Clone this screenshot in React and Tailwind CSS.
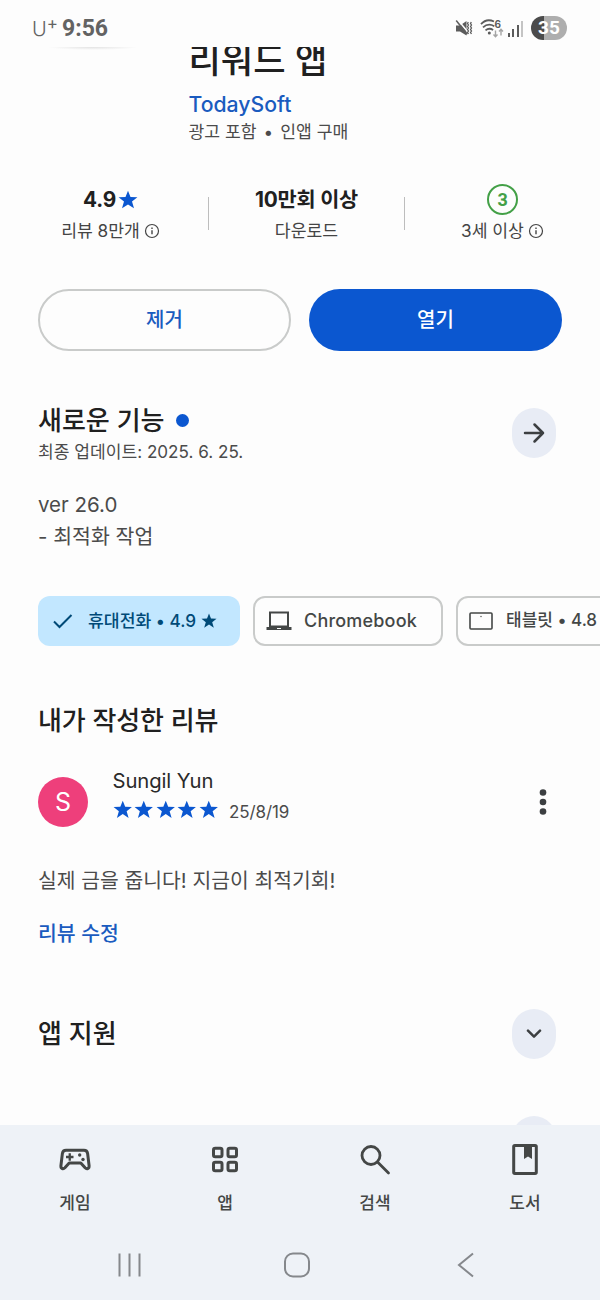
import clsx from "clsx";

const STAR_PATH =
  "M12 .8l3 7.500 8.300.3-6.500 5.200 2.400 8.200-7.200-4.700L4.800 22l2.400-8.200L.7 8.600l8.300-.3z";

const Star = ({ className }) => (
  <svg viewBox="0 0 24 24" fill="currentColor" className={className}>
    <path d={STAR_PATH} />
  </svg>
);

const InfoIcon = () => (
  <svg viewBox="0 0 16 16" fill="none" stroke="currentColor" className="size-4">
    <circle cx="8" cy="8" r="6.500" strokeWidth="1.200" />
    <path d="M8 7.200v4M8 4.600v1.300" strokeWidth="1.400" />
  </svg>
);

const StatusBar = () => (
  <header className="flex h-[47px] shrink-0 items-start justify-between pl-[32px] pr-[33px] text-[#636363]">
    <div className="flex pt-[15px] leading-7">
      <span className="text-[20px] font-light">U</span>
      <span className="-mt-[6px] text-[17px]">+</span>
      <span className="ml-[4px] font-['Roboto',sans-serif] text-[23px] font-bold">
        9:56
      </span>
    </div>
    <div className="flex items-center pt-[16px]">
      {/* 진동 모드 */}
      <svg viewBox="0 0 18 18" className="-ml-[2px] h-[18px] w-[18px]" fill="none">
        <path d="M1 6.500h4L11.500 2v14.500L5 12.500H1z" fill="#5c5c5c" />
        <path d="M2.500 0.500l12 14.500" stroke="#fdfdfd" strokeWidth="1.600" />
        <path d="M1.200 1.500l11 13.800" stroke="#5c5c5c" strokeWidth="1.500" />
        <path
          d="M13.300 3l-.8 1.500 1 1.500-1 1.500 1 1.500-1 1.500 1 1.500-1 1.500 1 1.500M16.300 3l-.8 1.500 1 1.500-1 1.500 1 1.500-1 1.500 1 1.500-1 1.500 1 1.500"
          stroke="#5c5c5c"
          strokeWidth="1.300"
        />
      </svg>
      <svg viewBox="0 0 26 20" className="ml-[7px] h-5 w-[26px]" fill="none">
        <path
          d="M1 6.200C4.500 2.200 9.500 1.400 14 3.500M3 9.400C6.200 6.400 10.500 6 14.300 8.200M5.500 12.400c2.300-2 5.300-2 7.600-.4"
          stroke="#5c5c5c"
          strokeWidth="1.800"
        />
        <circle cx="9.300" cy="15" r="1.500" fill="#5c5c5c" />
        <text x="14.500" y="9.500" fontSize="10" fontWeight="700" fill="#5c5c5c">
          6
        </text>
        <path
          d="M15.500 12.500v6m-2-2l2 2.200 2-2.200M21 17.500v-6m-2 2l2-2.200 2 2.200"
          stroke="#a5a5a5"
          strokeWidth="1.400"
        />
      </svg>
      <div className="ml-[2px] flex h-[17px] items-end gap-[2.500px]">
        <i className="h-[4px] w-[2px] bg-[#5c5c5c]" />
        <i className="h-[8px] w-[2px] bg-[#5c5c5c]" />
        <i className="h-[12px] w-[2px] bg-[#5c5c5c]" />
        <i className="h-[16px] w-[2px] bg-[#c4c4c4]" />
      </div>
      <div className="ml-[8px] flex h-6 w-[36px] items-center justify-center rounded-full bg-linear-to-r from-[#4b4b4b] from-35% to-[#aeaeae] to-35% pt-px font-['Roboto',sans-serif] text-[19px] font-bold text-white">
        35
      </div>
    </div>
  </header>
);

const AppHeader = () => (
  <section className="flex h-[96px] shrink-0">
    <div className="h-1 w-[188.500px] shrink-0 pl-[48px]">
      <div className="h-[3px] w-[90px] bg-radial-[50%_100%_at_50%_0%] from-[#e2e2e2] to-transparent" />
    </div>
    <div className="-mt-[7px] whitespace-nowrap">
      <h1 className="text-[35.200px] font-medium leading-10 text-[#202020]">
        리워드 앱
      </h1>
      <p className="mt-[10px] text-[21.200px] font-medium leading-7 text-[#1a5bbf]">
        TodaySoft
      </p>
      <p className="mt-[2px] flex gap-[7px] text-[17.200px] leading-6 text-[#4b4b4b]">
        <span>광고 포함</span>
        <span>•</span>
        <span>인앱 구매</span>
      </p>
    </div>
  </section>
);

const Stat = ({ top, label, info }) => (
  <div className="flex w-[195px] flex-col items-center">
    <div className="flex h-[31px] items-center text-[20.800px] font-bold tracking-[-0.200px] text-[#202020]">
      {top}
    </div>
    <div className="mt-[4px] flex h-6 items-center gap-[4px] text-[17.200px] text-[#444]">
      {label}
      {info && <InfoIcon />}
    </div>
  </div>
);

const Divider = () => <div className="mt-[13px] h-[33px] w-px bg-[#bdbdbd]" />;

const Stats = () => (
  <section className="mt-[41px] flex h-[64px] shrink-0 pl-[13px]">
    <Stat
      top={
        <>
          4.9
          <Star className="ml-[2px] size-5 text-[#0b57d0]" />
        </>
      }
      label="리뷰 8만개"
      info
    />
    <Divider />
    <Stat top="10만회 이상" label="다운로드" />
    <Divider />
    <Stat
      top={
        <span className="flex size-[31px] items-center justify-center rounded-full border-2 border-[#43a047] font-['Roboto',sans-serif] text-[18px] text-[#43a047]">
          3
        </span>
      }
      label="3세 이상"
      info
    />
  </section>
);

const Actions = () => (
  <section className="mt-[41px] flex h-[62px] shrink-0 gap-[18px] px-[38px] text-[20px] font-medium">
    <button
      type="button"
      className="w-[253px] rounded-full border-2 border-[#c9cbca] text-[#1a5bbf]"
    >
      제거
    </button>
    <button
      type="button"
      className="w-[253px] rounded-full bg-[#0b57d0] text-white"
    >
      열기
    </button>
  </section>
);

const RoundButton = ({ children }) => (
  <button
    type="button"
    className="flex h-[50px] w-[44px] shrink-0 items-center justify-center rounded-[22px] bg-[#e8ecf5] text-[#3c3f41]"
  >
    {children}
  </button>
);

const WhatsNew = () => (
  <section className="mt-[53px] shrink-0 pl-[38px] pr-[44px]">
    <div className="flex items-start justify-between">
      <div>
        <h2 className="flex h-[32px] items-center text-[26px] font-medium text-[#202020]">
          새로운 기능
          <span className="ml-[11px] size-[13px] rounded-full bg-[#0b57d0]" />
        </h2>
        <p className="mt-[4px] text-[17.100px] leading-6 text-[#4b4b4b]">
          최종 업데이트: 2025. 6. 25.
        </p>
      </div>
      <div className="mt-[4px]">
        <RoundButton>
          <svg
            viewBox="0 0 24 24"
            className="size-6"
            fill="none"
            stroke="currentColor"
            strokeWidth="2.500"
            strokeLinecap="round"
            strokeLinejoin="round"
          >
            <path d="M3 12h18M12.500 3.500L21 12l-8.500 8.500" />
          </svg>
        </RoundButton>
      </div>
    </div>
    <div className="mt-[25px] text-[20.500px] leading-[32px] text-[#4b4b4b]">
      <p>ver 26.0</p>
      <p>- 최적화 작업</p>
    </div>
  </section>
);

const Chip = ({ className, children }) => (
  <div
    className={clsx(
      "flex h-[50px] shrink-0 items-center rounded-[12px] whitespace-nowrap font-medium",
      className
    )}
  >
    {children}
  </div>
);

const DeviceChips = () => (
  <section className="mt-[43px] flex h-[50px] shrink-0 gap-[13px] overflow-hidden pl-[38px]">
    <Chip className="w-[202px] bg-[#c2e7ff] pl-[15px] text-[17.200px] text-[#004a77]">
      <svg
        viewBox="0 0 20 16"
        className="mr-[15px] h-4 w-5"
        fill="none"
        stroke="currentColor"
        strokeWidth="2"
      >
        <path d="M1 8.500l5.500 5.500L18.500 2" />
      </svg>
      휴대전화 • 4.9
      <Star className="ml-[5px] size-4" />
    </Chip>
    <Chip className="w-[190px] border-2 border-[#c9cbca] pl-[11px] text-[18px] tracking-[0.200px] text-[#444746]">
      <svg viewBox="0 0 26 20" className="mr-[12px] h-5 w-[26px]">
        <path
          d="M4 1.500h18v14H4z"
          fill="none"
          stroke="currentColor"
          strokeWidth="2"
        />
        <path d="M0.500 16h25v3H0.500z" fill="currentColor" />
        <path d="M11 17h4v1h-4z" fill="#fff" />
      </svg>
      <span className="-mt-[2px]">Chromebook</span>
    </Chip>
    <Chip className="w-[190px] border-2 border-[#c9cbca] pl-[11px] text-[17px] text-[#444746]">
      <svg
        viewBox="0 0 24 18"
        className="mr-[13px] h-[18px] w-6"
        fill="none"
        stroke="currentColor"
      >
        <rect x="1" y="1" width="22" height="16" rx="1" strokeWidth="1.600" />
        <circle cx="12" cy="4.500" r=".7" fill="currentColor" stroke="none" />
      </svg>
      태블릿 • 4.8
    </Chip>
  </section>
);

const MyReview = () => (
  <section className="mt-[59px] shrink-0 pl-[38px] pr-[50px]">
    <h2 className="text-[26px] font-medium leading-8 tracking-[-0.100px] text-[#202020]">
      내가 작성한 리뷰
    </h2>
    <div className="mt-[30px] flex h-[62px] items-start">
      <div className="mt-[10px] flex size-[50px] items-center justify-center rounded-full bg-[#ee3f7b] pt-[2px] text-[25px] text-white">
        S
      </div>
      <div className="ml-[24.500px]">
        <p className="text-[20.300px] leading-[28px] tracking-[-0.100px] text-[#2a2a2a]">
          Sungil Yun
        </p>
        <div className="flex h-[30px] items-center">
          <div className="flex gap-[2px] text-[#0b57d0]">
            {[1, 2, 3, 4, 5].map((n) => (
              <Star key={n} className="-mt-px size-[19.500px]" />
            ))}
          </div>
          <span className="ml-[11px] mt-[6px] text-[17px] tracking-[-0.100px] text-[#4b4b4b]">
            25/8/19
          </span>
        </div>
      </div>
      <svg
        viewBox="0 0 14 28"
        className="ml-auto mt-[21px] h-7 w-[14px] text-[#3c3f41]"
        fill="currentColor"
      >
        <circle cx="7" cy="4.500" r="3.300" />
        <circle cx="7" cy="14" r="3.300" />
        <circle cx="7" cy="23.500" r="3.300" />
      </svg>
    </div>
    <p className="mt-[37px] text-[20.400px] leading-[30px] text-[#4b4b4b]">
      실제 금을 줍니다! 지금이 최적기회!
    </p>
    <p className="mt-[23px] text-[20.500px] font-medium leading-[30px] text-[#1a5bbf]">
      리뷰 수정
    </p>
  </section>
);

const ChevronDown = () => (
  <svg
    viewBox="0 0 16 10"
    className="h-[10px] w-4"
    fill="none"
    stroke="currentColor"
    strokeWidth="2.500"
    strokeLinecap="round"
    strokeLinejoin="round"
  >
    <path d="M2 1.700l6 6 6-6" />
  </svg>
);

const Support = () => (
  <section className="mt-[60px] shrink-0 pl-[38px] pr-[44px]">
    <div className="flex items-center justify-between">
      <h2 className="text-[26px] font-medium leading-8 text-[#202020]">
        앱 지원
      </h2>
      <RoundButton>
        <ChevronDown />
      </RoundButton>
    </div>
    <div className="mt-[57px] flex justify-end">
      <RoundButton>
        <ChevronDown />
      </RoundButton>
    </div>
  </section>
);

const navItems = [
  {
    label: "게임",
    icon: (
      <g fill="none" stroke="currentColor" strokeWidth="3">
        <path
          d="M9 8.300h18c1.800 0 3.300 1.300 3.600 3.100l1.500 12.400c.2 2.900-2.400 3.600-4 2l-4.300-4.800H12.200l-4.300 4.800c-1.600 1.600-4.200.9-4-2l1.500-12.400C5.700 9.600 7.200 8.300 9 8.300z"
          strokeLinejoin="round"
        />
        <path d="M9 15h7.500M12.750 11.300v7.400" strokeWidth="2.300" />
        <circle cx="22.700" cy="13" r="1.700" fill="currentColor" stroke="none" />
        <circle cx="26" cy="17.500" r="1.700" fill="currentColor" stroke="none" />
      </g>
    ),
  },
  {
    label: "앱",
    icon: (
      <g fill="none" stroke="currentColor" strokeWidth="3">
        <rect x="6.500" y="6.200" width="8.500" height="8.500" rx="1.800" />
        <rect x="21" y="6.200" width="8.500" height="8.500" rx="1.800" />
        <rect x="6.500" y="20.300" width="8.500" height="8.500" rx="1.800" />
        <rect x="21" y="20.300" width="8.500" height="8.500" rx="1.800" />
      </g>
    ),
  },
  {
    label: "검색",
    icon: (
      <g fill="none" stroke="currentColor" strokeWidth="2.800">
        <circle cx="14" cy="13.500" r="9" />
        <path d="M20.500 20L31.500 31" strokeLinecap="round" />
      </g>
    ),
  },
  {
    label: "도서",
    icon: (
      <g>
        <rect
          x="6.700"
          y="3.400"
          width="22.600"
          height="28"
          rx="1.200"
          fill="none"
          stroke="currentColor"
          strokeWidth="3"
        />
        <path d="M17 4h8v13l-4-2.500-4 2.500z" fill="currentColor" />
      </g>
    ),
  },
];

const BottomNav = () => (
  <nav className="flex h-[105px] shrink-0 pt-[17px] text-[#444746]">
    {navItems.map((item) => (
      <div key={item.label} className="flex w-[150px] flex-col items-center">
        <svg viewBox="0 0 36 36" className="size-9">
          {item.icon}
        </svg>
        <span className="mt-[13px] text-[17px] font-medium leading-6">
          {item.label}
        </span>
      </div>
    ))}
  </nav>
);

const SystemNav = () => (
  <div className="flex h-[70px] items-center justify-between pl-[117px] pr-[125px] text-[#85888c]">
    <svg
      viewBox="0 0 24 26"
      className="h-[26px] w-6"
      stroke="currentColor"
      strokeWidth="2"
    >
      <path d="M2.500 1.500v23M12.500 1.500v23M22.500 1.500v23" />
    </svg>
    <svg viewBox="0 0 26 26" className="-ml-[4px] size-[26px]" fill="none">
      <rect
        x="1"
        y="1.500"
        width="24"
        height="23"
        rx="8"
        stroke="currentColor"
        strokeWidth="2"
      />
    </svg>
    <svg
      viewBox="0 0 18 26"
      className="h-[26px] w-[18px]"
      fill="none"
      stroke="currentColor"
      strokeWidth="2"
    >
      <path d="M16 1.500L2 13l14 11.500" />
    </svg>
  </div>
);

const App = () => (
  <div className="flex h-[1300px] w-[600px] flex-col overflow-hidden bg-[#fdfdfd] font-['Inter','Noto_Sans_CJK_KR',sans-serif]">
    <StatusBar />
    <main className="flex h-[1078px] shrink-0 flex-col overflow-hidden">
      <AppHeader />
      <Stats />
      <Actions />
      <WhatsNew />
      <DeviceChips />
      <MyReview />
      <Support />
    </main>
    <footer className="flex h-[175px] flex-col bg-[#eef2f7]">
      <BottomNav />
      <SystemNav />
    </footer>
  </div>
);

export default App;
